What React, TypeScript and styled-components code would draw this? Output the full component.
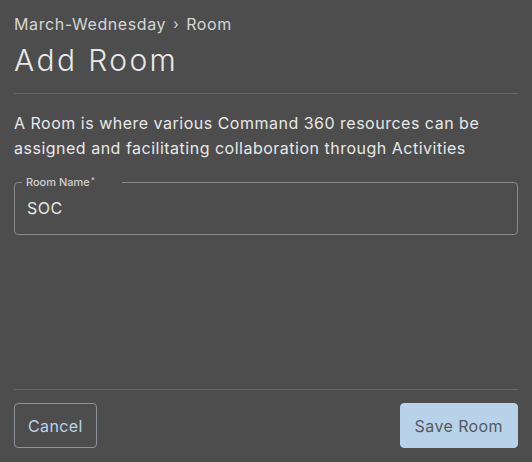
import React from "react";
import styled, { createGlobalStyle } from "styled-components";

const GlobalStyle = createGlobalStyle`
  html, body { margin: 0; padding: 0; background: #4d4d4d; }
  body { font-family: Inter, "Noto Sans", sans-serif; -webkit-font-smoothing: antialiased; }
  * { box-sizing: border-box; }
`;

const Page = styled.div`
  display: flex;
  flex-direction: column;
  height: 100vh;
  padding: 14px 14px 14px;
  background: #4d4d4d;
  color: #e6e6e6;
`;

const Breadcrumb = styled.nav`
  display: flex;
  align-items: center;
  gap: 7px;
  font-size: 16px;
  line-height: 20px;
  letter-spacing: 0.6px;
  color: #d6d6d6;
`;

const Sep = styled.span`
  font-size: 14px;
`;

const Title = styled.h1`
  margin: 8px 0 0;
  font-size: 30px;
  line-height: 36px;
  font-weight: 300;
  letter-spacing: 2.4px;
  color: #e8e8e8;
`;

const Divider = styled.hr<{ $top: number }>`
  margin: ${(p) => p.$top}px 0 0;
  border: none;
  height: 1px;
  background: #676767;
`;

const Body = styled.div`
  flex: 1;
  display: flex;
  flex-direction: column;
`;

const Description = styled.p`
  margin: 17px 0 0;
  font-size: 16px;
  line-height: 25px;
  letter-spacing: 0.5px;
  color: #e8e8e8;
`;

const Field = styled.fieldset`
  margin: 15px 0 0;
  padding: 0 12px;
  border: 1px solid #8a8a8a;
  border-radius: 4px;
  min-width: 0;
`;

const Legend = styled.legend`
  margin-left: -5px;
  padding: 0 27px 0 4px;
  font-size: 11px;
  line-height: 12px;
  font-weight: 500;
  color: #d0d0d0;
`;

const Req = styled.sup`
  font-size: 8px;
  margin-left: 1px;
  vertical-align: 3px;
  line-height: 0;
`;

const Input = styled.input`
  display: block;
  width: 100%;
  margin: 0;
  padding: 10px 0 16px;
  border: none;
  outline: none;
  background: transparent;
  font-family: inherit;
  font-size: 16px;
  line-height: 20px;
  height: 46px;
  letter-spacing: 0.5px;
  color: #e8e8e8;
`;

const Footer = styled.div`
  display: flex;
  justify-content: space-between;
  margin-top: 13px;
`;

const Button = styled.button<{ $primary?: boolean }>`
  height: 45px;
  padding: 0 ${(p) => (p.$primary ? 14 : 13)}px;
  border-radius: 4px;
  font-family: inherit;
  font-size: 16px;
  letter-spacing: 0.4px;
  cursor: pointer;
  border: 1px solid ${(p) => (p.$primary ? "#b8d3e9" : "#8c9299")};
  background: ${(p) => (p.$primary ? "#b8d3e9" : "transparent")};
  color: ${(p) => (p.$primary ? "#55585c" : "#b9d3e8")};
`;

export default function App() {
  return (
    <>
      <GlobalStyle />
      <Page>
        <Breadcrumb>
          <span>March-Wednesday</span>
          <Sep>›</Sep>
          <span>Room</span>
        </Breadcrumb>
        <Title>Add Room</Title>
        <Divider $top={15} />
        <Body>
          <Description>
            A Room is where various Command 360 resources can be assigned and facilitating
            collaboration through Activities
          </Description>
          <Field>
            <Legend>
              Room Name<Req>*</Req>
            </Legend>
            <Input defaultValue="SOC" />
          </Field>
        </Body>
        <Divider $top={0} />
        <Footer>
          <Button>Cancel</Button>
          <Button $primary>Save Room</Button>
        </Footer>
      </Page>
    </>
  );
}
